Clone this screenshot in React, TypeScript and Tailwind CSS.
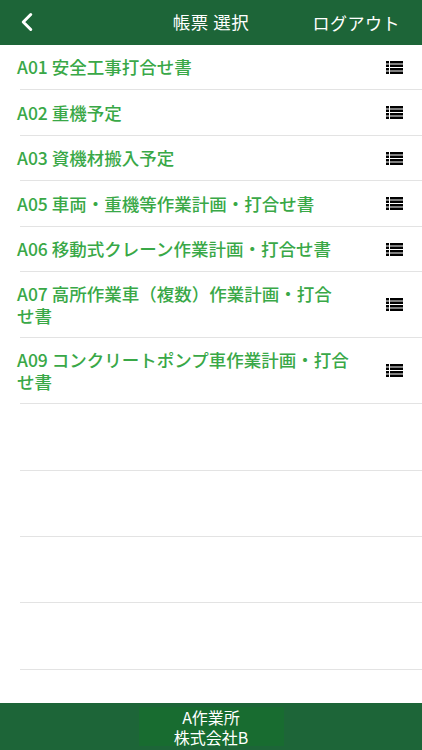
import { ChevronLeft } from "lucide-react";

const forms = [
  { code: "A01", name: "安全工事打合せ書", h: "h-[44.4px]" },
  { code: "A02", name: "重機予定", h: "h-[44.4px]" },
  { code: "A03", name: "資機材搬入予定", h: "h-[44.6px]" },
  { code: "A05", name: "車両・重機等作業計画・打合せ書", h: "h-[44.6px]" },
  { code: "A06", name: "移動式クレーン作業計画・打合せ書", h: "h-[44.4px]" },
  { code: "A07", name: "高所作業車（複数）作業計画・打合\nせ書", h: "h-[65px]" },
  { code: "A09", name: "コンクリートポンプ車作業計画・打合\nせ書", h: "h-[65px]" },
];

function ListIcon() {
  return (
    <svg width="17" height="13" viewBox="0 0 17 13" className="shrink-0">
      {[0, 3.5, 7, 10.5].map((y) => (
        <g key={y} fill="#000">
          <rect x="0" y={y} width="3" height="2.5" />
          <rect x="4" y={y} width="13" height="2.5" />
        </g>
      ))}
    </svg>
  );
}

export default function App() {
  return (
    <div
      className="flex flex-col w-[422px] h-[750px] bg-white overflow-hidden"
      style={{ fontFamily: '"Noto Sans CJK JP", "Noto Sans", sans-serif' }}
    >
      <div className="relative flex items-center justify-center h-[45px] shrink-0 bg-[#1d6538] text-white">
        <ChevronLeft className="absolute left-[12px] top-[7px] w-[30px] h-[30px]" strokeWidth={2.4} />
        <span className="text-[17.5px] tracking-[0.5px]">帳票 選択</span>
        <span className="absolute right-[22px] text-[17px] tracking-[0.5px]">ログアウト</span>
      </div>

      <div className="flex-1 overflow-hidden">
        {forms.map((f) => (
          <div key={f.code}>
            <div className={`flex items-center justify-between pl-[17px] pr-[19px] ${f.h}`}>
              <p className="w-[345px] whitespace-pre-line text-[17.5px] leading-[22px] font-medium text-[#39a847]">
                {f.code} {f.name}
              </p>
              <ListIcon />
            </div>
            <div className="ml-5 h-px bg-[#e3e3e3]" />
          </div>
        ))}
        {[0, 1, 2, 3].map((i) => (
          <div key={i}>
            <div className="h-[65.3px]" />
            <div className="ml-5 h-px bg-[#e3e3e3]" />
          </div>
        ))}
      </div>

      <div className="flex justify-center h-[47px] shrink-0 bg-[#1d6538] py-[4px]">
        <div className="flex flex-col items-center justify-center w-[145px] bg-[#186c30] text-white text-[16px] leading-[20px]">
          <span>A作業所</span>
          <span>株式会社B</span>
        </div>
      </div>
    </div>
  );
}
